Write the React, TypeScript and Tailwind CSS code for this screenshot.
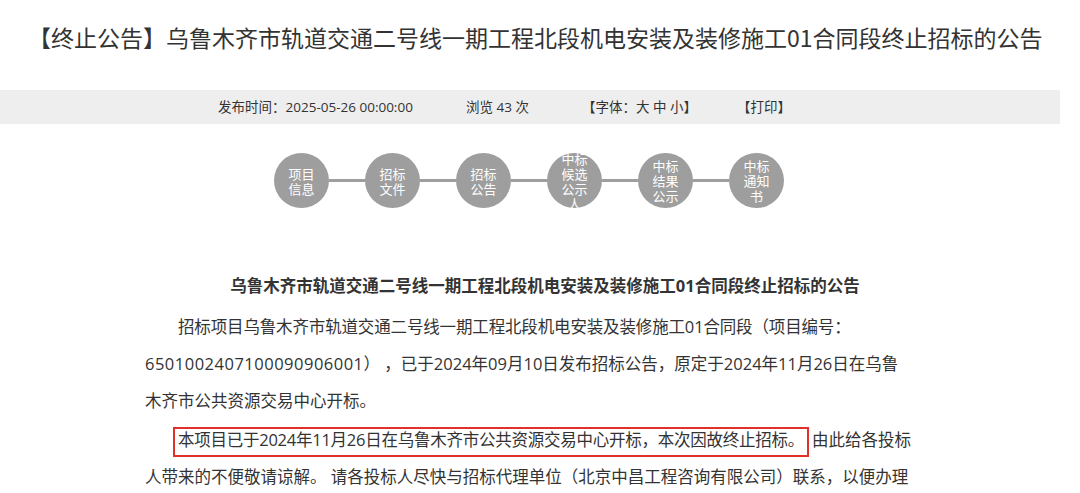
import React from "react";

const steps: string[][] = [
  ["项目", "信息"],
  ["招标", "文件"],
  ["招标", "公告"],
  ["中标", "候选", "公示", "人"],
  ["中标", "结果", "公示"],
  ["中标", "通知", "书"],
];

export default function App() {
  return (
    <div
      className="w-[1080px] h-[493px] overflow-hidden bg-white text-[#333]"
      style={{ fontFamily: '"Open Sans", "Noto Sans CJK SC", sans-serif' }}
    >
      {/* Title */}
      <h1
        className="pt-[21px] pl-[28px] text-[23px] leading-[32px] font-normal text-[#333] whitespace-nowrap"
        style={{ fontFamily: '"Noto Sans CJK SC", sans-serif' }}
      >
        【终止公告】乌鲁木齐市轨道交通二号线一期工程北段机电安装及装修施工01合同段终止招标的公告
      </h1>

      {/* Meta bar */}
      <div className="mt-[37px] w-[1060px] h-[34px] bg-[#eeeeee] flex items-center pl-[218px] text-[13.5px] text-[#333] whitespace-nowrap">
        <span className="w-[248px]">发布时间：2025-05-26 00:00:00</span>
        <span className="w-[116px]">浏览 43 次</span>
        <span className="w-[155px]">【字体：大 中 小】</span>
        <span>【打印】</span>
      </div>

      {/* Steps */}
      <div className="mt-[29px] pl-[274px] flex items-center h-[55px]">
        {steps.map((lines, i) => (
          <React.Fragment key={i}>
            {i > 0 && <div className="w-[36px] h-[3px] bg-[#9e9e9e]" />}
            <div
              className="w-[55px] h-[55px] shrink-0 rounded-full bg-[#9e9e9e] flex flex-col items-center justify-center text-[13px] leading-[15px] text-white overflow-visible"
              style={{ fontFamily: '"Noto Sans CJK SC", sans-serif' }}
            >
              {lines.map((l, j) => (
                <span key={j} className="whitespace-nowrap">
                  {l}
                </span>
              ))}
            </div>
          </React.Fragment>
        ))}
      </div>

      {/* Article */}
      <div className="ml-[145px] w-[800px] mt-[63px]">
        <h2 className="text-center text-[16.5px] leading-[30px] font-bold text-[#333] whitespace-nowrap">
          乌鲁木齐市轨道交通二号线一期工程北段机电安装及装修施工01合同段终止招标的公告
        </h2>
        <p className="mt-[7px] text-[16.5px] leading-[37px] text-[#333] whitespace-nowrap">
          <span className="pl-[33px] tracking-[-0.15px]">招标项目乌鲁木齐市轨道交通二号线一期工程北段机电安装及装修施工01合同段（项目编号：</span>
          <br />
          <span className="tracking-[0.5px]">6501002407100090906001</span>） ，已于2024年09月10日发布招标公告，原定于2024年11月26日在乌<span className="tracking-[0.5px]">鲁</span>
          <br />
          木齐市公共资源交易中心开标。
        </p>
        <p className="mt-[2px] text-[16.5px] leading-[37px] text-[#333] whitespace-nowrap">
          <span className="pl-[28px]">
            <span className="inline-block leading-[22px] pt-0 pb-[4px] border-2 border-[#e0322b] px-[3px] tracking-[-0.25px]">
              本项目已于2024年11月26日在乌鲁木齐市公共资源交易中心开标，本次因故终止招标。
            </span>
            <span className="ml-[3px]">由此给各投标</span>
          </span>
          <br />
          人带来的不便敬请谅解。 请各投标人尽快与招标代理单位（北京中昌工程咨询有限公司）联系，以便办理
        </p>
      </div>
    </div>
  );
}
